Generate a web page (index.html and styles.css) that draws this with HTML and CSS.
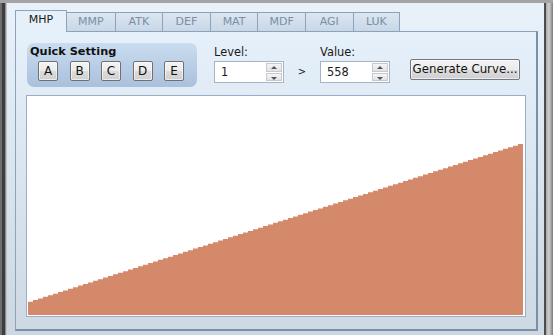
FILE: index.html
```html
<!DOCTYPE html>
<html>
<head>
<meta charset="utf-8">
<link rel="stylesheet" href="styles.css">
</head>
<body>
<div class="win">
  <div class="edge-l"></div>
  <div class="client">
    <div class="tabs">
      <div class="tab sel">MHP</div>
      <div class="tab">MMP</div>
      <div class="tab">ATK</div>
      <div class="tab">DEF</div>
      <div class="tab">MAT</div>
      <div class="tab">MDF</div>
      <div class="tab">AGI</div>
      <div class="tab last">LUK</div>
    </div>
    <div class="panel">
      <div class="toolbar">
        <div class="quick">
          <div class="quick-title">Quick Setting</div>
          <div class="quick-btns">
            <div class="btn qb">A</div>
            <div class="btn qb">B</div>
            <div class="btn qb">C</div>
            <div class="btn qb">D</div>
            <div class="btn qb">E</div>
          </div>
        </div>
        <div class="field">
          <div class="label">Level:</div>
          <div class="spin">
            <span class="val">1</span>
            <div class="arrows"><span class="arr up"></span><span class="arr down"></span></div>
          </div>
        </div>
        <div class="gt">&gt;</div>
        <div class="field">
          <div class="label">Value:</div>
          <div class="spin">
            <span class="val">558</span>
            <div class="arrows"><span class="arr up"></span><span class="arr down"></span></div>
          </div>
        </div>
        <div class="btn gen">Generate Curve...</div>
      </div>
      <div class="chart">
        <svg class="plot" width="495" height="218" viewBox="0 0 495 218">
          <path fill="#d4896a" d="M0 218V204.7
          h5v-1.609h5v-1.609h5v-1.609h5v-1.609h5v-1.609h5v-1.609h5v-1.609h5v-1.609h5v-1.609h5v-1.609
          h5v-1.609h5v-1.609h5v-1.609h5v-1.609h5v-1.609h5v-1.609h5v-1.609h5v-1.609h5v-1.609h5v-1.609
          h5v-1.609h5v-1.609h5v-1.609h5v-1.609h5v-1.609h5v-1.609h5v-1.609h5v-1.609h5v-1.609h5v-1.609
          h5v-1.609h5v-1.609h5v-1.609h5v-1.609h5v-1.609h5v-1.609h5v-1.609h5v-1.609h5v-1.609h5v-1.609
          h5v-1.609h5v-1.609h5v-1.609h5v-1.609h5v-1.609h5v-1.609h5v-1.609h5v-1.609h5v-1.609h5v-1.609
          h5v-1.609h5v-1.609h5v-1.609h5v-1.609h5v-1.609h5v-1.609h5v-1.609h5v-1.609h5v-1.609h5v-1.609
          h5v-1.609h5v-1.609h5v-1.609h5v-1.609h5v-1.609h5v-1.609h5v-1.609h5v-1.609h5v-1.609h5v-1.609
          h5v-1.609h5v-1.609h5v-1.609h5v-1.609h5v-1.609h5v-1.609h5v-1.609h5v-1.609h5v-1.609h5v-1.609
          h5v-1.609h5v-1.609h5v-1.609h5v-1.609h5v-1.609h5v-1.609h5v-1.609h5v-1.609h5v-1.609h5v-1.609
          h5v-1.609h5v-1.609h5v-1.609h5v-1.609h5v-1.609h5v-1.609h5v-1.609h5v-1.609
          h5V218Z"/>
        </svg>
      </div>
    </div>
  </div>
  <div class="edge-r"></div>
</div>
</body>
</html>
```

FILE: styles.css
```css
html, body {
  margin: 0;
  padding: 0;
  background: #8c8c8c;
}
body {
  font-family: "DejaVu Sans", Verdana, sans-serif;
  font-size: 11px;
  color: #1b1b1b;
}
.win {
  width: 553px;
  height: 335px;
  display: flex;
  box-sizing: border-box;
  border-top: 3px solid #a4a4a4;
  overflow: hidden;
}
.edge-l {
  width: 7px;
  flex: none;
  background: linear-gradient(to right, #6e6e6e 0, #6e6e6e 2px, #3d3d3d 2px, #3d3d3d 5px, #8d8d8d 5px, #8d8d8d 6px, #b9c4cf 6px);
}
.edge-r {
  width: 9px;
  flex: none;
  background: linear-gradient(to right, #4c4c4c 0, #4c4c4c 2px, #a9a9a9 2px, #cfcfcf 5px, #7c7c7c 9px);
}
.client {
  width: 537px;
  flex: none;
  box-sizing: border-box;
  padding: 7px 6px 0 8px;
  background: linear-gradient(#e9f2fb, #ccd7e2);
}
.tabs {
  display: flex;
  align-items: flex-end;
  height: 22px;
  margin-bottom: -1px;
}
.tab {
  position: relative;
  box-sizing: border-box;
  width: 47.6px;
  height: 19px;
  margin-bottom: 1px;
  border-top: 1px solid #8ea2ba;
  border-left: 1px solid #8ea2ba;
  background: linear-gradient(#dbe6f1, #c8d7e7);
  color: #7d8ea4;
  text-align: center;
  line-height: 18px;
}
.tab.last {
  border-right: 1px solid #8ea2ba;
}
.tab.sel {
  z-index: 1;
  width: 52px;
  height: 22px;
  margin-bottom: 0;
  border: 1px solid #8ea2ba;
  border-bottom: none;
  background: #e6f0fa;
  color: #1b1b1b;
  line-height: 17px;
}
.tab.sel + .tab {
  border-left: none;
}
.panel {
  box-sizing: border-box;
  height: 300px;
  border-top: 1px solid #8ea2ba;
  border-left: 1px solid #8ea2ba;
  border-right: 2px solid #7d8fa6;
  border-bottom: 2px solid #7d8fa6;
  padding: 11px 11px 0 10px;
  background: linear-gradient(#e6f0fa, #cfd9e4);
}
.toolbar {
  display: flex;
  align-items: flex-start;
  height: 44px;
  margin-left: 1px;
}
.quick {
  width: 170px;
  height: 44px;
  box-sizing: border-box;
  border-radius: 7px;
  background: linear-gradient(#cadcef, #a9c1dd);
  padding: 2px 0 0 3px;
}
.quick-title {
  font-weight: bold;
  font-size: 11.3px;
  line-height: 13px;
  color: #111;
}
.quick-btns {
  display: flex;
  gap: 11.5px;
  margin: 3px 0 0 8px;
}
.btn {
  box-sizing: border-box;
  border: 1px solid #707070;
  border-radius: 2px;
  background: linear-gradient(#f3f3f3 0, #ebebeb 50%, #dddddd 50%, #cfcfcf 100%);
  box-shadow: inset 0 0 0 1px rgba(255,255,255,0.6);
  color: #111;
  text-align: center;
}
.qb {
  width: 20px;
  height: 20px;
  line-height: 18px;
  font-size: 12px;
}
.field {
  margin-left: 17px;
  padding-top: 2px;
}
.field + .gt + .field {
  margin-left: 0;
}
.label {
  line-height: 14px;
  margin-bottom: 2px;
  font-size: 11.4px;
}
.spin {
  width: 70px;
  height: 22px;
  box-sizing: border-box;
  border: 1px solid #a7b4c4;
  background: #fff;
  display: flex;
  align-items: center;
  justify-content: space-between;
  padding: 1px 1px 1px 6px;
}
.val {
  line-height: 18px;
  font-size: 11.4px;
}
.arrows {
  display: flex;
  flex-direction: column;
  gap: 1px;
  width: 16px;
  height: 18px;
}
.arr {
  flex: 1;
  position: relative;
  box-sizing: border-box;
  border: 1px solid #c3cad3;
  background: linear-gradient(#f5f5f5, #e2e2e2);
}
.arr::after {
  content: "";
  position: absolute;
  left: 4px;
  width: 0;
  height: 0;
  border-left: 3px solid transparent;
  border-right: 3px solid transparent;
}
.arr.up::after {
  top: 2px;
  border-bottom: 3px solid #555;
}
.arr.down::after {
  top: 3px;
  border-top: 3px solid #555;
}
.gt {
  width: 36px;
  text-align: center;
  margin-top: 22px;
  line-height: 14px;
  font-size: 10px;
}
.gen {
  margin-left: 20px;
  margin-top: 16px;
  width: 110px;
  height: 21px;
  line-height: 19px;
  font-size: 11.8px;
  border-color: #6f7a86;
}
.chart {
  margin-top: 8px;
  width: 500px;
  height: 222px;
  box-sizing: border-box;
  border: 1px solid #9aaec6;
  background: #fff;
  padding: 1px;
}
.plot {
  display: block;
}
```
